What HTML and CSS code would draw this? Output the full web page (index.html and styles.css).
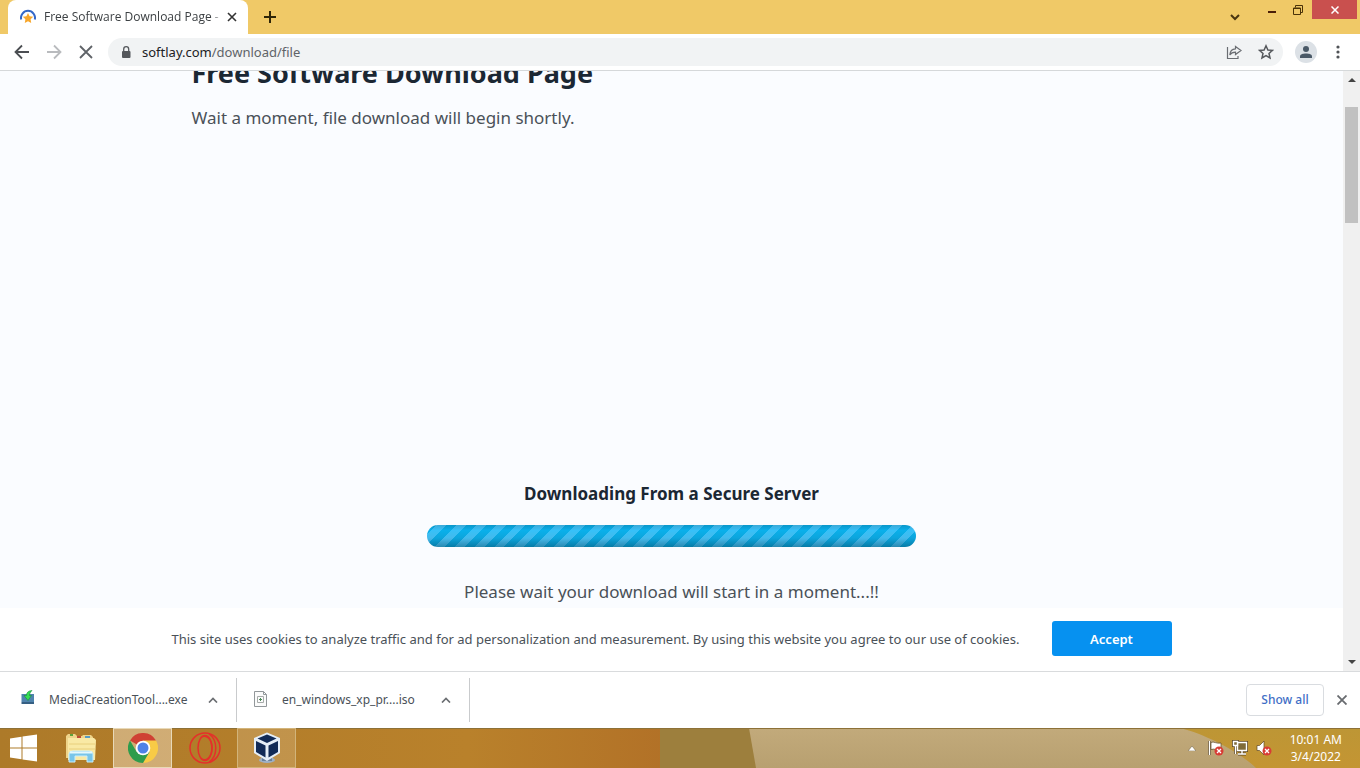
FILE: index.html
```html
<!DOCTYPE html>
<html lang="en">
<head>
	<meta charset="UTF-8">
	<meta name="viewport" content="width=device-width, initial-scale=1">
	<title>Free Software Download Page - Softlay</title>
	<link rel="stylesheet" href="styles.css">
</head>
<body>
	<!-- tab strip -->
	<header class="tabstrip">
		<div class="tab">
			<svg class="favicon" width="16" height="16" viewBox="0 0 16 16">
				<path d="M1.200 10.500A7 7 0 1 1 14.800 10.500" fill="none" stroke="#3568c8" stroke-width="2"/>
				<path d="M8 4l1.600 3.300 3.600.5-2.600 2.500.6 3.700L8 12.200 4.800 14l.6-3.700-2.600-2.500 3.600-.5z" fill="#f8a72c"/>
			</svg>
			<span class="tab-title">Free Software Download Page - Softlay</span>
			<button class="tab-close" type="button" aria-label="Close tab">
				<svg width="10" height="10" viewBox="0 0 10 10"><path d="M1 1l8 8M9 1L1 9" stroke="#333" stroke-width="1.600"/></svg>
			</button>
		</div>
		<button class="new-tab" type="button" aria-label="New tab">
			<svg width="12" height="12" viewBox="0 0 12 12"><path d="M6 0v12M0 6h12" stroke="#2e2508" stroke-width="2"/></svg>
		</button>
		<div class="window-buttons">
			<button class="tab-search" type="button" aria-label="Search tabs">
				<svg width="10" height="7" viewBox="0 0 10 7"><path d="M1 1l4 4 4-4" fill="none" stroke="#4a3510" stroke-width="2"/></svg>
			</button>
			<button class="win-btn" type="button" aria-label="Minimize">
				<svg width="10" height="10" viewBox="0 0 10 10"><path d="M1 7h8" stroke="#4a1e08" stroke-width="2"/></svg>
			</button>
			<button class="win-btn" type="button" aria-label="Restore">
				<svg width="10" height="10" viewBox="0 0 10 10"><path d="M.5 3h7v6.500h-7zM0 3.500h8M2.500 2.500V.5h7v7H8" fill="none" stroke="#4a3208"/></svg>
			</button>
			<button class="win-btn win-close" type="button" aria-label="Close">
				<svg width="8" height="8" viewBox="0 0 8 8"><path d="M.5.5l7 7M7.500.5l-7 7" stroke="#fff" stroke-width="1.500"/></svg>
			</button>
		</div>
	</header>

	<!-- address bar -->
	<nav class="toolbar">
		<button class="nav-btn" type="button" aria-label="Back">
			<svg width="16" height="16" viewBox="0 0 16 16"><path d="M15 8H2M8 1.500L1.500 8 8 14.500" fill="none" stroke="#4b4e52" stroke-width="1.800"/></svg>
		</button>
		<button class="nav-btn" type="button" aria-label="Forward" disabled>
			<svg width="16" height="16" viewBox="0 0 16 16"><path d="M1 8h13M8 1.500L14.500 8 8 14.500" fill="none" stroke="#b9bbbe" stroke-width="1.800"/></svg>
		</button>
		<button class="nav-btn" type="button" aria-label="Stop">
			<svg width="14" height="14" viewBox="0 0 14 14"><path d="M1 1l12 12M13 1L1 13" stroke="#5f6368" stroke-width="1.800"/></svg>
		</button>
		<div class="omnibox">
			<svg class="lock" width="10" height="13" viewBox="0 0 10 13"><rect x="1" y="5" width="8.500" height="7" rx="1" fill="#55585c"/><path d="M2.700 5.500V3.200a2.500 2.500 0 0 1 5 0v2.300" fill="none" stroke="#55585c" stroke-width="1.300"/></svg>
			<a class="url" href="#">softlay.com<span>/download/file</span></a>
			<button class="omni-btn" type="button" aria-label="Share">
				<svg width="16" height="16" viewBox="0 0 16 16"><path d="M1.500 3v11.500H12V12M9.500 2.500L15 6.500 9.500 10.500V8.200C7 8.200 5 9 3.800 11 4 7.500 6 5 9.500 4.800z" fill="none" stroke="#6a6d72" stroke-width="1.200"/></svg>
			</button>
			<button class="omni-btn" type="button" aria-label="Bookmark">
				<svg width="16" height="16" viewBox="0 0 16 16"><path d="M8 1.800l1.900 4.200 4.500.4-3.400 3 1 4.500L8 11.500l-4 2.400 1-4.500-3.400-3 4.500-.4z" fill="none" stroke="#55585c" stroke-width="1.500"/></svg>
			</button>
		</div>
		<button class="avatar" type="button" aria-label="Profile">
			<svg width="14" height="14" viewBox="0 0 14 14"><circle cx="7" cy="4" r="3" fill="#4a5967"/><path d="M1 13v-1.500C1 9.300 4 8.500 7 8.500s6 .8 6 3V13z" fill="#4a5967"/></svg>
		</button>
		<button class="menu-btn" type="button" aria-label="Menu">
			<svg width="4" height="14" viewBox="0 0 4 14"><g fill="#505357"><circle cx="2" cy="2" r="1.600"/><circle cx="2" cy="7" r="1.600"/><circle cx="2" cy="12" r="1.600"/></g></svg>
		</button>
	</nav>

	<div class="viewport">
		<main class="page">
			<div class="content">
				<h1>Free Software Download Page</h1>
				<p class="lead">Wait a moment, file download will begin shortly.</p>
				<section class="download">
					<h2>Downloading From a Secure Server</h2>
					<div class="progress" role="progressbar" aria-label="Download"></div>
					<p>Please wait your download will start in a moment...!!</p>
				</section>
			</div>
			<div class="cookies">
				<div class="cookies-inner">
					<p>This site uses cookies to analyze traffic and for ad personalization and measurement. By using this website you agree to our use of cookies.</p>
					<button type="button">Accept</button>
				</div>
			</div>
		</main>
		<div class="scrollbar">
			<svg width="8" height="4" viewBox="0 0 8 4"><path d="M0 4l4-4 4 4z" fill="#444"/></svg>
			<div class="thumb"></div>
			<svg width="8" height="4" viewBox="0 0 8 4"><path d="M0 0l4 4 4-4z" fill="#444"/></svg>
		</div>
	</div>

	<!-- downloads shelf -->
	<section class="shelf">
		<div class="file">
			<svg width="16" height="20" viewBox="0 0 16 20"><rect x="1.500" y="4" width="12.500" height="8" fill="#4f83ad"/><path d="M1.500 12h12.500v2h-12.500z" fill="#365f83"/><path d="M12 .5C8.300.8 6.500 2.500 6.500 5.500H4L8 10.500l3.500-5H9.500C9.500 3.500 10.500 2 12 .5z" fill="#35dd52" stroke="#168b38" stroke-width=".6"/></svg>
			<a href="#">MediaCreationTool....exe</a>
			<button type="button" aria-label="File options"><svg width="10" height="6" viewBox="0 0 10 6"><path d="M1 5.500l4-4 4 4" fill="none" stroke="#6b6e72" stroke-width="1.700"/></svg></button>
		</div>
		<div class="file">
			<svg width="16" height="18" viewBox="0 0 16 18"><path d="M1.500.5h9l3 3v12h-12zM10.500.5v3h3" fill="#fbfbfb" stroke="#92979a"/><path d="M4.500 5.500h6v6h-6z" fill="none" stroke="#a6aaa9"/><path d="M6 8.500h3M7.500 7v3" stroke="#4b8a57"/></svg>
			<a href="#">en_windows_xp_pr....iso</a>
			<button type="button" aria-label="File options"><svg width="10" height="6" viewBox="0 0 10 6"><path d="M1 5.500l4-4 4 4" fill="none" stroke="#6b6e72" stroke-width="1.700"/></svg></button>
		</div>
		<button class="show-all" type="button">Show all</button>
		<button class="shelf-close" type="button" aria-label="Close downloads">
			<svg width="10" height="10" viewBox="0 0 10 10"><path d="M.5.5l9 9M9.500.5l-9 9" stroke="#686b6f" stroke-width="1.800"/></svg>
		</button>
	</section>

	<footer class="taskbar">
		<svg class="wallpaper" viewBox="0 0 1360 40" preserveAspectRatio="none">
			<defs>
				<linearGradient id="gold" x1="0" x2="1" y1="0" y2="0"><stop offset="0" stop-color="#ad7a29"/><stop offset=".7" stop-color="#b9812b"/><stop offset="1" stop-color="#b27127"/></linearGradient>
				<linearGradient id="sand" x1="0" x2="0" y1="0" y2="1"><stop offset="0" stop-color="#c2aa7b"/><stop offset="1" stop-color="#b8a070"/></linearGradient>
				<linearGradient id="sun" x1="0" x2="0" y1="0" y2="1"><stop offset="0" stop-color="#bd9635"/><stop offset="1" stop-color="#c49533"/></linearGradient>
			</defs>
			<path d="M0 0h668v40H0z" fill="url(#gold)"/>
			<path d="M660 0h110v40h-110z" fill="#9d7f3d"/>
			<path d="M749 0h551v40H756z" fill="url(#sand)"/>
			<path d="M1180 0C1205 6 1240 24 1256 40H1360V0z" fill="url(#sun)"/>
			<path d="M0 .5h1360" stroke="#8d7138"/>
		</svg>
		<button class="start" type="button" aria-label="Start">
			<svg width="28" height="28" viewBox="0 0 28 28"><path d="M0 4.500l11.500-1.700v10.700H0zM12.500 2.600L27 .5v13H12.500zM0 14.500h11.500v10.700L0 23.500zM12.500 14.500H27v13l-14.500-2.100z" fill="#fff"/></svg>
		</button>
		<button class="task" type="button" aria-label="File Explorer">
			<svg width="32" height="32" viewBox="0 0 32 32">
				<path d="M1 4l2-2h7l2 2h5l1-1h8l2 2v21H1z" fill="#eed48a"/>
				<path d="M3 6h26l2 2-1 20H3z" fill="#f9e9a5"/>
				<path d="M4 12h26M4 17h26" stroke="#e8cf7d"/>
				<path d="M5 2h3v2H5z" fill="#5ea23c"/><path d="M12 4h4v2h-4z" fill="#c14b36"/><path d="M20 4h5v2h-5z" fill="#579bc2"/>
				<path d="M4 30V22q0-3 4-3h16q4 0 4 3v8h-6v-6H10v6z" fill="#78c5e9" stroke="#c9eefa"/>
				<path d="M5 20.500h22" stroke="#e4f8fd" stroke-width="2"/>
			</svg>
		</button>
		<button class="task active" type="button" aria-label="Google Chrome">
			<svg width="30" height="30" viewBox="0 0 30 30">
				<path d="M15 15L2 7.500A15 15 0 0 1 28 7.500z" fill="#cf4034"/>
				<path d="M15 7.500h13A15 15 0 0 1 15 30l6.500-11.300z" fill="#f8cb46"/>
				<path d="M2 7.500A15 15 0 0 0 15 30l6.500-11.300-13 .1z" fill="#2f9c4c"/>
				<circle cx="15" cy="15" r="7.300" fill="#fff"/><circle cx="15" cy="15" r="5.500" fill="#4e82e7"/>
			</svg>
		</button>
		<button class="task" type="button" aria-label="Opera">
			<svg width="32" height="32" viewBox="0 0 32 32" fill="none" stroke="#e4302a" stroke-width="1.500"><circle cx="16" cy="16" r="15"/><ellipse cx="16" cy="16" rx="7" ry="12.500"/><path d="M12 5.500c5-4 11 2 11 10.500s-6 14.500-11 10.500M20 1.800c9 6 9 22.400 0 28.400"/></svg>
		</button>
		<button class="task open" type="button" aria-label="VirtualBox">
			<svg width="28" height="32" viewBox="0 0 28 32">
				<ellipse cx="14" cy="28" rx="8" ry="3" fill="#9eb0c4"/><path d="M9 25h10v4H9z" fill="#6a819b"/>
				<path d="M14 .5L27 6v15l-13 8-13-8V6z" fill="#e5eef7"/>
				<path d="M14 2.500l9.500 4L14 11 4.500 6.500zM3 9l9.500 4.500v12L3 20zM25 9l-9.500 4.500v12L25 20z" fill="#112a56"/>
			</svg>
		</button>
		<div class="tray">
			<svg class="tray-arrow" width="8" height="5" viewBox="0 0 8 5"><path d="M0 5l4-5 4 5z" fill="#fff" stroke="#66583b" stroke-width=".5"/></svg>
			<svg width="16" height="16" viewBox="0 0 16 16"><path d="M1.500 1v14" stroke="#5f4823" stroke-width="3"/><path d="M1.500 1v14" stroke="#fff" stroke-width="1.500"/><path d="M3 2.500c3-1.500 5 1.500 10 .5v7C9 11 7 8 3 9.500z" fill="#fff" stroke="#5f4823" stroke-width=".7"/><circle cx="11" cy="11" r="4.500" fill="#d83c35"/><path d="M9 9l4 4M13 9l-4 4" stroke="#fff" stroke-width="1.300"/></svg>
			<svg width="16" height="16" viewBox="0 0 16 16"><path d="M5.500 2.500h9v8h-9zM10 10.500v3M6 14h8M1.500 1.500h4v4h-4zM3.500 5.500V14" fill="none" stroke="#5f4823" stroke-width="3"/><path d="M5.500 2.500h9v8h-9zM10 10.500v3M6 14h8" fill="#806b39" stroke="#fff" stroke-width="1.400"/><path d="M1.500 1.500h4v4h-4zM3.500 5.500V14" fill="#806b39" stroke="#fff" stroke-width="1.400"/></svg>
			<svg width="16" height="16" viewBox="0 0 16 16"><path d="M1 5.500h2.500L8 1v14l-4.500-4.500H1z" fill="#fff" stroke="#5f4823" stroke-width=".7"/><circle cx="11" cy="11" r="4.500" fill="#d83c35"/><path d="M9 9l4 4M13 9l-4 4" stroke="#fff" stroke-width="1.300"/></svg>
			<div class="clock"><time>10:01 AM</time><time>3/4/2022</time></div>
		</div>
	</footer>
</body>
</html>
```

FILE: styles.css
```css
*{box-sizing:border-box;margin:0;padding:0;}
body{display:flex;flex-direction:column;height:100vh;overflow:hidden;background:#fff;color:#4a5158;font:13px/20px "Segoe UI","Noto Sans","Open Sans",sans-serif;}
button{display:flex;align-items:center;justify-content:center;flex:none;border:0;background:none;font:inherit;color:inherit;}
a{color:inherit;text-decoration:none;}
svg{flex:none;display:block;}

/* tabs */
.tabstrip{display:flex;flex:none;height:34px;padding-left:8px;background:#f0c967;}
.tab{display:flex;align-items:center;width:240px;padding:0 10px 0 12px;background:#fff;border-radius:8px 8px 0 0;}
.tab-title{flex:1;margin-left:8px;overflow:hidden;white-space:nowrap;font-family:"Segoe UI","Open Sans",sans-serif;font-size:12px;color:#3c4043;-webkit-mask-image:linear-gradient(90deg,#000 168px,transparent 178px);mask-image:linear-gradient(90deg,#000 168px,transparent 178px);}
.tab-close{width:12px;height:20px;}
.new-tab{width:28px;height:34px;margin-left:8px;}
.window-buttons{display:flex;margin-left:auto;padding-right:3px;}
.tab-search{width:28px;height:34px;margin-right:10px;}
.win-btn{width:26px;height:19px;}
.win-close{width:45px;margin-left:1px;background:#c9504e;}

/* toolbar */
.toolbar{display:flex;align-items:center;flex:none;height:37px;padding:0 12px 0 6px;background:#fff;border-bottom:1px solid #d5d8da;}
.nav-btn{width:32px;height:32px;}
.omnibox{display:flex;align-items:center;flex:1;height:28px;margin-left:6px;padding:0 1px 0 13px;background:#f1f3f4;border-radius:14px;}
.url{display:flex;flex:1;margin-left:11px;color:#202124;}
.url span{color:#5f6368;}
.omni-btn{width:32px;height:28px;}
.avatar{width:22px;height:22px;margin:0 11px 0 12px;border-radius:50%;background:#dce1e6;}
.menu-btn{width:20px;height:28px;}

/* page */
.viewport{display:flex;flex:1;min-height:0;}
.page{display:flex;flex-direction:column;justify-content:space-between;flex:1;overflow:hidden;background:#fafcff;}
.content{width:100%;max-width:960px;margin:-18px auto 0;}
h1{font-size:27px;line-height:40px;color:#1b2733;}
.lead{margin-top:12px;font-size:17px;line-height:26px;}
.download{display:flex;flex-direction:column;align-items:center;margin-top:350px;text-align:center;}
h2{font-size:17px;line-height:26px;color:#1b2733;}
.download p{margin-top:32px;font-size:17px;line-height:26px;}
.progress{width:51%;height:22px;margin-top:18px;border-radius:11px;background:linear-gradient(rgba(0,110,150,.3),rgba(0,190,255,.35) 25%,rgba(0,150,200,.2) 60%,rgba(0,80,110,.5)),repeating-linear-gradient(135deg,#0fa8e0 0 7px,#54c2f4 7px 14px);}
.cookies{flex:none;height:63px;padding:13px 20px 0;background:#fff;}
.cookies-inner{display:flex;align-items:center;justify-content:space-between;max-width:1000px;margin:0 auto;}
.cookies button{width:120px;height:35px;border-radius:3px;background:#0691f0;color:#fff;font-weight:600;}
.scrollbar{display:flex;flex-direction:column;align-items:center;width:17px;padding:7px 0;background:#f0f0f0;}
.thumb{width:13px;height:116px;margin:25px 0 auto;background:#c1c1c1;}

/* downloads */
.shelf{display:flex;align-items:center;flex:none;height:57px;padding-right:10px;background:#fff;border-top:1px solid #d9dbdd;}
.file{display:flex;align-items:center;height:44px;width:237px;padding:0 16px 0 20px;border-right:1px solid #c9cbcd;}
.file + .file{width:233px;padding-left:16px;}
.file a{flex:1;margin-left:13px;white-space:nowrap;font-size:12px;}
.file button{width:14px;height:24px;}
.show-all{width:78px;height:32px;margin-left:auto;border:1px solid #d9dce0;border-radius:4px;color:#3f6fc6;font-size:12px;font-weight:500;}
.shelf-close{width:16px;height:24px;margin-left:10px;}

/* taskbar */
.taskbar{display:flex;position:relative;flex:none;height:40px;color:#fff;}
.wallpaper{position:absolute;inset:0;width:100%;height:100%;z-index:-1;}
.start{width:48px;margin-right:3px;}
.task{width:59px;margin-right:3px;border:1px solid transparent;}
.task.active{background:rgba(255,245,230,.4);border-color:#e8d9b8;}
.task.open{background:rgba(255,245,230,.18);border-color:#d2b47a;}
.tray{display:flex;align-items:center;gap:8px;margin-left:auto;padding-right:18px;}
.tray-arrow{margin-right:4px;}
.clock{display:flex;flex-direction:column;align-items:center;margin-left:10px;font-size:12px;line-height:17px;}
```
